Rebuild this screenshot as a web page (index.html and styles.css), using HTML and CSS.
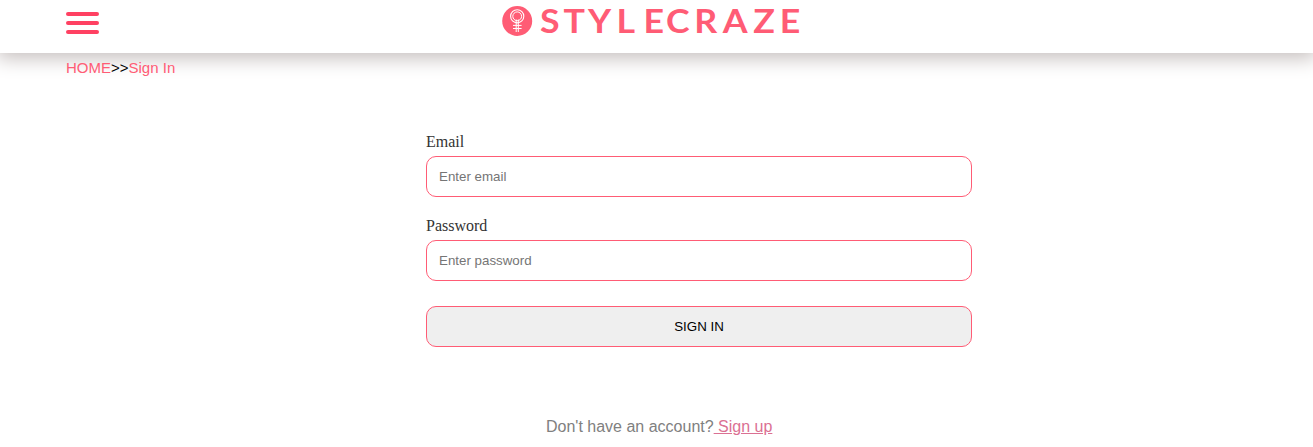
FILE: index.html
```html
<!DOCTYPE html>
<html lang="en">
<head>
<meta charset="utf-8">
<title>Sign In</title>
<link rel="stylesheet" href="styles.css">
</head>
<body>
<header class="header">
  <button class="menu" aria-label="Menu"><span class="bar"></span><span class="bar"></span><span class="bar"></span></button>
  <svg class="logo" width="310" height="48" viewBox="0 -4 310 48" role="img" aria-label="Stylecraze">
    <circle cx="15.2" cy="17" r="15" fill="#ff5c75"/>
    <g fill="none" stroke="#fff">
      <circle cx="15.2" cy="12.3" r="6.6" stroke-width="1.1"/>
      <circle cx="15.2" cy="12.3" r="4.4" stroke-width="1"/>
      <path d="M14.2 15.5V28M16.3 15.5V28M11 21.4h8.6M11 24.5h8.6" stroke-width="1"/>
    </g>
    <text class="wordmark" transform="scale(1.1 1)" y="28.8" x="34.5 55.9 78.2 104 128.6 149.2 174.8 200.6 228.3 252.4">STYLECRAZE</text>
  </svg>
</header>
<nav class="crumbs"><a href="#">HOME</a>&gt;&gt;<a href="#">Sign In</a></nav>
<main class="signin">
  <form class="form">
    <label class="label" for="email">Email</label>
    <input class="field" id="email" type="email" placeholder="Enter email">
    <label class="label" for="password">Password</label>
    <input class="field" id="password" type="password" placeholder="Enter password">
    <button class="submit" type="button">SIGN IN</button>
  </form>
  <p class="signup">Don't have an account?<a href="#"> Sign up</a></p>
</main>
</body>
</html>
```
FILE: styles.css
```css
* { box-sizing: border-box; }
body { margin: 0; background: #fff; font-family: "Liberation Sans", Arial, sans-serif; overflow: hidden; }
.header { height: 53px; display: flex; align-items: flex-start; padding: 0 66px; box-shadow: 0 2px 20px 3px #c4bdbc; }
.menu { display: flex; flex-direction: column; gap: 5px; width: 33px; margin: 12px 403px 0 0; padding: 0; border: 0; background: none; }
.bar { width: 33px; height: 4px; border-radius: 2px; background: #ff4162; }
.logo { display: block; }
.wordmark { font: 700 32.5px Lato, sans-serif; fill: #ff5c75; }
.crumbs { padding: 6px 66px 0; font-size: 15px; line-height: 18px; color: #000; }
.crumbs a { color: #ff5c75; text-decoration: none; }
.form { width: 546px; margin: 56px 0 0 426px; display: flex; flex-direction: column; }
.label { font: 16px/18px "Liberation Serif", "Times New Roman", serif; color: #333; margin-bottom: 5px; }
.field { height: 41px; margin: 0 0 20px; padding: 0 12px; border: 1px solid #ff5c75; border-radius: 10px; background: #fff; font: 13.333px "Liberation Sans", Arial, sans-serif; }
.field::placeholder { color: #757575; }
.submit { height: 41px; margin-top: 5px; padding: 0; border: 1px solid #ff5c75; border-radius: 10px; background: #efefef; color: #000; font: 13.333px "Liberation Sans", Arial, sans-serif; }
.signup { margin: 71px 0 0 546px; font-size: 16px; line-height: 18px; color: #808080; }
.signup a { color: #db7093; }
```
